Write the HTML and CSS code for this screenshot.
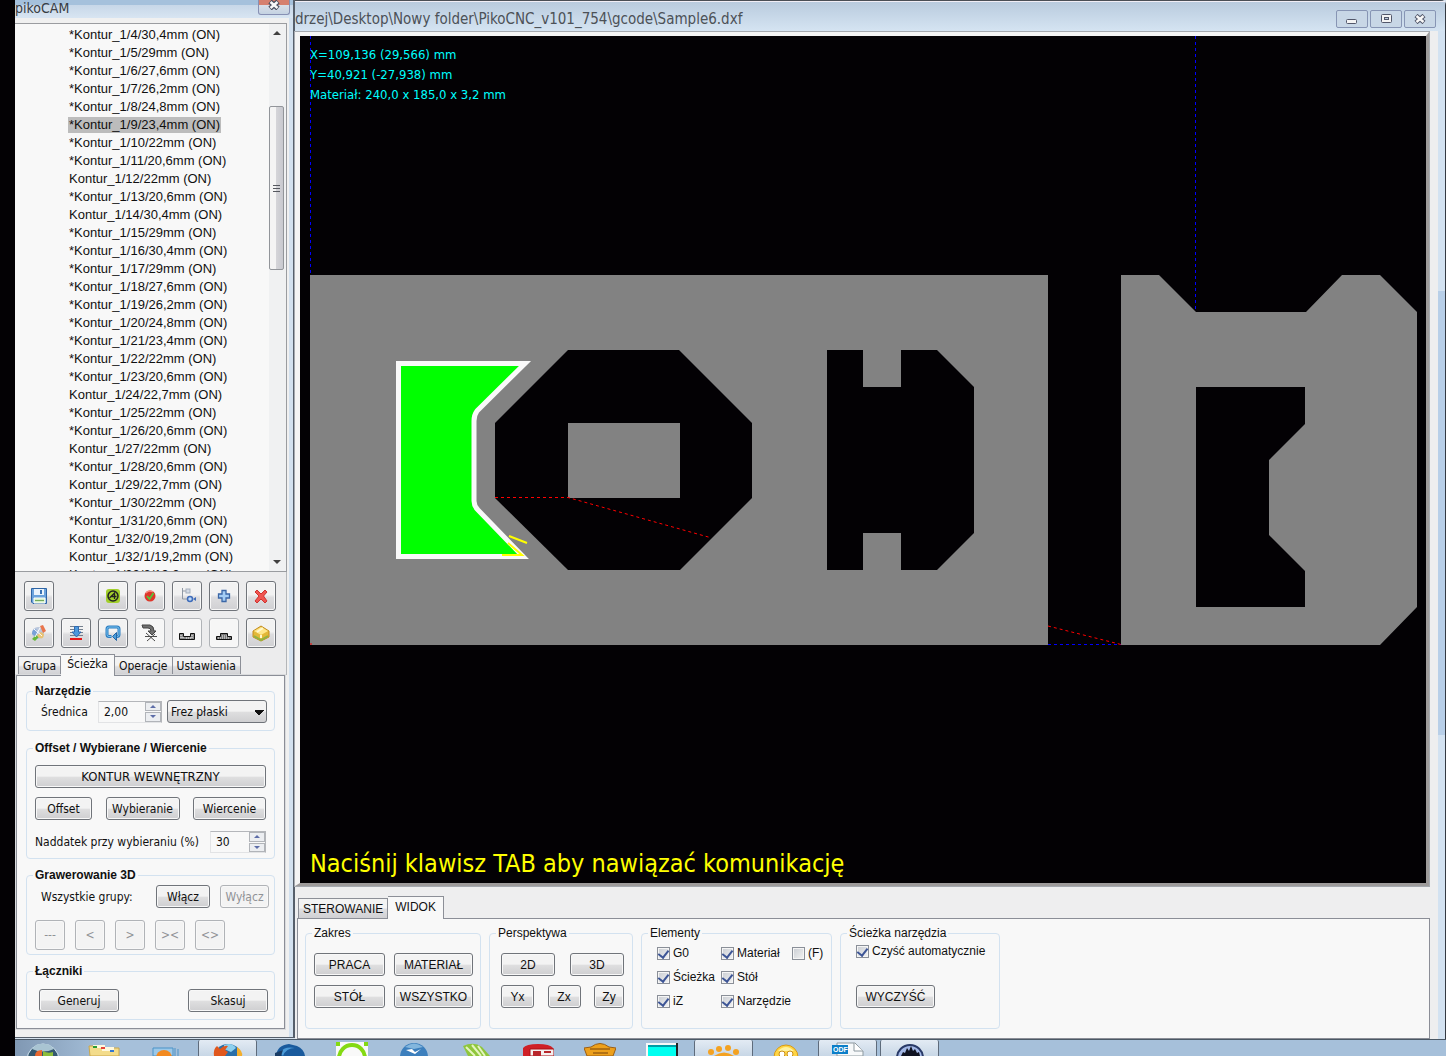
FILE: index.html
```html
<!DOCTYPE html>
<html lang="pl">
<head>
<meta charset="utf-8">
<title>pikoCAM</title>
<link rel="stylesheet" href="styles.css">
</head>
<body>
<div class="desktop">
  <div class="windows">
    <section class="cam">
      <header class="cam-title">
        <h1>pikoCAM</h1>
        <button class="close" aria-label="Zamknij"><svg width="12" height="10" viewBox="0 0 12 10"><path d="M2 1.500 10 8.500M10 1.500 2 8.500" stroke="#4a4d5e" stroke-width="5"/><path d="M2.500 2 9.500 8M9.500 2 2.500 8" stroke="#f8f8f8" stroke-width="2.600"/></svg></button>
      </header>
      <div class="cam-body">
        <div class="tree">
          <ul>
            <li>*Kontur_1/4/30,4mm (ON)</li>
            <li>*Kontur_1/5/29mm (ON)</li>
            <li>*Kontur_1/6/27,6mm (ON)</li>
            <li>*Kontur_1/7/26,2mm (ON)</li>
            <li>*Kontur_1/8/24,8mm (ON)</li>
            <li><span class="selected">*Kontur_1/9/23,4mm (ON)</span></li>
            <li>*Kontur_1/10/22mm (ON)</li>
            <li>*Kontur_1/11/20,6mm (ON)</li>
            <li>Kontur_1/12/22mm (ON)</li>
            <li>*Kontur_1/13/20,6mm (ON)</li>
            <li>Kontur_1/14/30,4mm (ON)</li>
            <li>*Kontur_1/15/29mm (ON)</li>
            <li>*Kontur_1/16/30,4mm (ON)</li>
            <li>*Kontur_1/17/29mm (ON)</li>
            <li>*Kontur_1/18/27,6mm (ON)</li>
            <li>*Kontur_1/19/26,2mm (ON)</li>
            <li>*Kontur_1/20/24,8mm (ON)</li>
            <li>*Kontur_1/21/23,4mm (ON)</li>
            <li>*Kontur_1/22/22mm (ON)</li>
            <li>*Kontur_1/23/20,6mm (ON)</li>
            <li>Kontur_1/24/22,7mm (ON)</li>
            <li>*Kontur_1/25/22mm (ON)</li>
            <li>*Kontur_1/26/20,6mm (ON)</li>
            <li>Kontur_1/27/22mm (ON)</li>
            <li>*Kontur_1/28/20,6mm (ON)</li>
            <li>Kontur_1/29/22,7mm (ON)</li>
            <li>*Kontur_1/30/22mm (ON)</li>
            <li>*Kontur_1/31/20,6mm (ON)</li>
            <li>Kontur_1/32/0/19,2mm (ON)</li>
            <li>Kontur_1/32/1/19,2mm (ON)</li>
            <li>Kontur_1/32/2/19,2mm (ON)</li>
          </ul>
          <div class="scrollbar">
            <svg width="15" height="18" viewBox="0 0 15 18"><path d="M4 11 8 7l4 4z" fill="#404040"/></svg>
            <div class="track"><div class="thumb"><i></i><i></i><i></i></div></div>
            <svg width="15" height="18" viewBox="0 0 15 18"><path d="M4 7h8l-4 4z" fill="#404040"/></svg>
          </div>
        </div>
        <div class="toolbar">
          <button class="tool first" aria-label="Zapisz"><svg viewBox="0 0 20 20"><path d="M2.500 2.500h15v15H4l-1.500-1.500z" fill="#6ba3dc" stroke="#2e64a5"/><path d="M5 3h10v6H5z" fill="#e9f3fc"/><path d="M11 4h2v4h-2z" fill="#3a72b4"/><path d="M5 12h11v5H5z" fill="#d5efc8" stroke="#fff"/><path d="M6 14.500h9" stroke="#73a95d"/></svg></button>
          <button class="tool skip" aria-label="Symulacja"><svg viewBox="0 0 20 20"><rect x="3" y="3" width="14" height="14" rx="3" fill="#a2cf2b"/><circle cx="10" cy="10" r="5" fill="none" stroke="#222" stroke-width="1.500"/><path d="m6.500 12 5-5v6M8 10.500h5.500" fill="none" stroke="#222" stroke-width="1.300"/></svg></button>
          <button class="tool" aria-label="Zatwierdź"><svg viewBox="0 0 20 20"><circle cx="10" cy="10" r="5.500" fill="#df352b"/><path d="M6 7a5 5 0 0 1 7-1" stroke="#f58b80" stroke-width="1.500" fill="none"/><path d="m7 10 2.500 3 4-6" fill="none" stroke="#55c93c" stroke-width="1.800"/></svg></button>
          <button class="tool" aria-label="Drzewo"><svg viewBox="0 0 20 20"><path d="M5.500 2v11H11M5.500 5H9" stroke="#9099a5" fill="none"/><rect x="9" y="3" width="4" height="4" fill="#d4dbe5" stroke="#a5afbd"/><circle cx="13" cy="13" r="2.500" fill="#bcd8f8" stroke="#3f6cb9" stroke-width="1.500"/><path d="m16 13 3-2v4z" fill="#3f6cb9"/></svg></button>
          <button class="tool" aria-label="Dodaj"><svg viewBox="0 0 20 20"><path d="M8 4.500h4V8h3.500v4H12v3.500H8V12H4.500V8H8z" fill="#a4cdf4" stroke="#3b66a6" stroke-width="1.300"/></svg></button>
          <button class="tool" aria-label="Usuń"><svg viewBox="0 0 20 20"><path d="m4 6 2-2 4 4 4-4 2 2-3.500 4L16 15l-2 2-4-4-4 4-2-2 4-5z" fill="#f05450" stroke="#ce3430"/></svg></button>
          <button class="tool" aria-label="Kolory"><svg viewBox="0 0 20 20"><circle cx="9" cy="10" r="6" fill="#bac7dc"/><path d="M3 11c0-4 2-5 4-5l2 4-2 4z" fill="#7aa1d8"/><path d="m11 3 3-1 3 6-3 2z" fill="#e9754c"/><path d="m3 16 4-4 3 2-4 4z" fill="#66b73c"/><path d="M9 14c4 3 6 1 6-3l-3-2-4 3z" fill="#e8c375"/><path d="m5 6 8 7M11 5l-5 9" stroke="#fff"/></svg></button>
          <button class="tool" aria-label="Głębokość"><svg viewBox="0 0 20 20"><path d="M4 3.500h13M4 6.500h13M4 9.500h13M4 12.500h13" stroke="#75808e"/><path d="M8.500 3.500h4V9H15l-4.500 5L6 9h2.500z" fill="#4c98dc" stroke="#3069ae"/><path d="M4 16h12" stroke="#e51919" stroke-width="2"/></svg></button>
          <button class="tool" aria-label="Odwróć"><svg viewBox="0 0 20 20"><path d="M8.500 13.500H6a2 2 0 0 1-2-2V6a2 2 0 0 1 2-2h8a2 2 0 0 1 2 2v5.500a2 2 0 0 1-2 2" fill="none" stroke="#2b7cc1" stroke-width="3"/><path d="M8 13.500H6a2 2 0 0 1-2-2V6a2 2 0 0 1 2-2h8a2 2 0 0 1 2 2v5.500a2 2 0 0 1-2 2" fill="none" stroke="#79c3ef"/><path d="m9.500 13.500 4-4v8z" fill="#499cda" stroke="#2365a4"/></svg></button>
          <button class="tool pale" aria-label="Punkt"><svg viewBox="0 0 20 20"><path d="M2 2h8q4 1 4 6h2l-4 4-4-4h3q0-3-3-3H3z" fill="#707070" stroke="#444"/><path d="M5 13.500h12M7 18l8-7M6 10l9 8" stroke="#4a4a4a"/></svg></button>
          <button class="tool pale" aria-label="Kieszeń"><svg viewBox="0 0 20 20"><path d="M2.500 10.500h4v3h7v-3h4v6h-15z" fill="#8b8b8b" stroke="#111"/><path d="M4 12v4M6 14v2M9 15h6M15 12v4" stroke="#f4f4f4" stroke-dasharray="1 1"/></svg></button>
          <button class="tool pale" aria-label="Wyspa"><svg viewBox="0 0 20 20"><path d="M2.500 16.500v-3h4v-3h7v3h4v3z" fill="#777" stroke="#111"/><path d="M4 15h12M8 13h5" stroke="#f4f4f4" stroke-dasharray="1 1"/></svg></button>
          <button class="tool" aria-label="Bryła"><svg viewBox="0 0 20 20"><path d="m2 8 8-5 8 5v6l-8 4-8-4z" fill="#e3b838" stroke="#c48d20"/><path d="m3 8 7-4 7 4-7 4z" fill="#ffe78b"/><path d="m3 13 7 4 7-4" fill="none" stroke="#92b440" stroke-width="2"/><path d="m6 9 6-4M10 12v3" stroke="#fff8cf" stroke-width="2"/></svg></button>
        </div>
        <nav class="tabs">
          <button class="tab">Grupa</button><button class="tab active">Ścieżka</button><button class="tab">Operacje</button><button class="tab">Ustawienia</button>
        </nav>
        <div class="page">
          <fieldset class="tool-group">
            <legend>Narzędzie</legend>
            <div class="row">
              <label class="indent grow" for="dia">Średnica</label>
              <span class="spin"><input id="dia" type="text" value="2,00"><span class="arrows"><button aria-label="Więcej" class="up"></button><button aria-label="Mniej" class="down"></button></span></span>
              <select class="select" aria-label="Rodzaj narzędzia"><option>Frez płaski</option></select>
            </div>
          </fieldset>
          <fieldset class="offset-group">
            <legend>Offset / Wybierane / Wiercenie</legend>
            <button class="btn wide">KONTUR WEWNĘTRZNY</button>
            <div class="row between"><button class="btn w57">Offset</button><button class="btn w74">Wybieranie</button><button class="btn w73">Wiercenie</button></div>
            <div class="row between low"><label for="nad">Naddatek przy wybieraniu (%)</label>
              <span class="spin narrow"><input id="nad" type="text" value="30"><span class="arrows"><button aria-label="Więcej" class="up"></button><button aria-label="Mniej" class="down"></button></span></span></div>
          </fieldset>
          <fieldset class="engrave-group">
            <legend>Grawerowanie 3D</legend>
            <div class="row"><span class="indent grow">Wszystkie grupy:</span><button class="btn w54">Włącz</button><button class="btn w49" disabled>Wyłącz</button></div>
            <div class="row squares"><button class="btn" disabled>---</button><button class="btn" disabled>&lt;</button><button class="btn" disabled>&gt;</button><button class="btn" disabled>&gt;&lt;</button><button class="btn" disabled>&lt;&gt;</button></div>
          </fieldset>
          <fieldset class="link-group">
            <legend>Łączniki</legend>
            <div class="row between"><button class="btn w80">Generuj</button><button class="btn w80">Skasuj</button></div>
          </fieldset>
        </div>
      </div>
    </section>

    <main class="cnc">
      <header class="cnc-title">
        <h2>drzej\Desktop\Nowy folder\PikoCNC_v101_754\gcode\Sample6.dxf</h2>
        <div class="controls">
          <button aria-label="Minimalizuj"><svg width="14" height="12" viewBox="0 0 14 12"><rect x="1.500" y="6.500" width="10" height="4" rx="1" fill="#f4f4f4" stroke="#52576a"/></svg></button>
          <button aria-label="Maksymalizuj"><svg width="14" height="12" viewBox="0 0 14 12"><rect x="2.500" y="1.500" width="10" height="8" rx="1" fill="#f4f4f4" stroke="#52576a"/><rect x="5.500" y="4.500" width="4" height="2" fill="#bccbdc" stroke="#52576a"/></svg></button>
          <button aria-label="Zamknij"><svg width="12" height="10" viewBox="0 0 12 10"><path d="M2 1.500 10 8.500M10 1.500 2 8.500" stroke="#52576a" stroke-width="4.500"/><path d="M2.500 2 9.500 8M9.500 2 2.500 8" stroke="#f8f8f8" stroke-width="2.400"/></svg></button>
        </div>
      </header>
      <div class="cnc-body">
        <div class="cnc-content">
          <div class="stage">
            <svg class="drawing" viewBox="300 36 1126 847" preserveAspectRatio="xMinYMin meet">
              <g fill="#828282">
                <path d="M310 275h738v370H310z"/>
                <path d="m1121 275h38l37 37h110l36-37h38l37 37v295l-37 38h-259z"/>
              </g>
              <g fill="#030104">
                <path d="M568 350h111l73 73v75l-72 72H568l-73-72v-75z"/>
                <path d="M827 350h36v37h38v-37h36l37 37v146l-37 37h-36v-37h-38v37h-36z"/>
                <path d="M1196 387h109v37l-36 36v75l36 36v36h-109z"/>
              </g>
              <path d="M568 423h112v75H568z" fill="#828282"/>
              <path d="M398.500 363.500H525L477 411q-3 4-3 10v80q0 5 4 9l45 46.500H398.500z" fill="#0f0" stroke="#f9f9f9" stroke-width="5"/>
              <path d="m509 536 18 7M508 543l14 12h-20" fill="none" stroke="#ff0" stroke-width="2"/>
              <g fill="none" stroke-dasharray="3 3">
                <path d="M310.500 36v239M1195.500 36v276M1048 644.500h73" stroke="#00f"/>
                <path d="M495 497.500h73l142 40M1048 626l73 18.500" stroke="#f00"/>
              </g>
              <path d="M310 644h2" stroke="#f00"/>
            </svg>
            <div class="readout"><p>X=109,136 (29,566) mm</p><p>Y=40,921 (-27,938) mm</p><p>Materiał: 240,0 x 185,0 x 3,2 mm</p></div>
            <p class="prompt">Naciśnij klawisz TAB aby nawiązać komunikację</p>
          </div>
          <nav class="tabs view-tabs"><button class="tab">STEROWANIE</button><button class="tab active">WIDOK</button></nav>
          <div class="view-page">
            <fieldset class="range">
              <legend>Zakres</legend>
              <div class="pair-grid"><button class="btn">PRACA</button><button class="btn">MATERIAŁ</button><button class="btn">STÓŁ</button><button class="btn">WSZYSTKO</button></div>
            </fieldset>
            <fieldset class="persp">
              <legend>Perspektywa</legend>
              <div class="row between"><button class="btn w54">2D</button><button class="btn w54">3D</button></div>
              <div class="row between"><button class="btn w33">Yx</button><button class="btn w33">Zx</button><button class="btn w30">Zy</button></div>
            </fieldset>
            <fieldset class="elements">
              <legend>Elementy</legend>
              <div class="checks">
                <label><input type="checkbox" checked>G0</label><label><input type="checkbox" checked>Materiał</label><label><input type="checkbox">(F)</label>
                <label><input type="checkbox" checked>Ścieżka</label><label><input type="checkbox" checked>Stół</label><span></span>
                <label><input type="checkbox" checked>iZ</label><label><input type="checkbox" checked>Narzędzie</label>
              </div>
            </fieldset>
            <fieldset class="path">
              <legend>Ścieżka narzędzia</legend>
              <label><input type="checkbox" checked>Czyść automatycznie</label>
              <button class="btn w79">WYCZYŚĆ</button>
            </fieldset>
          </div>
        </div>
      </div>
    </main>
  </div>

  <footer class="taskbar">
    <button class="task start" aria-label="Start"><svg viewBox="0 0 32 14"><circle cx="16" cy="18" r="16" fill="#34586f" stroke="#d7e9f4"/><path d="M5 7a14 14 0 0 1 22 0q-11 5-22 0" fill="#a9c4d2"/><path d="M8 14q0-6 7-6v6z" fill="#e9682f"/><path d="M16 9q5 3 10 1v4H16z" fill="#8cbd3a"/></svg></button>
    <button class="task" aria-label="Eksplorator"><svg viewBox="0 0 32 14"><path d="M1 4h10l2 2h18v8H2z" fill="#f3dc8b" stroke="#caa64b"/><path d="M5 3h12v3H5zM14 5h12v4H14z" fill="#fff8dc"/><path d="M5 4h4v2H5z" fill="#2a9b32"/><path d="M13 5h4v2h-4z" fill="#e4443a"/><path d="M22 8h4v2h-4z" fill="#3177d2"/></svg></button>
    <button class="task" aria-label="Odtwarzacz"><svg viewBox="0 0 32 14"><path d="M3 6h20v8H3zM25 6v8M28 7v7" fill="#9cc8e8" stroke="#4b93c8"/><circle cx="14" cy="16" r="8" fill="#f28a20"/></svg></button>
    <button class="task open" aria-label="Firefox"><svg viewBox="0 0 32 14"><circle cx="16" cy="16" r="14" fill="#2a6fa8"/><path d="M12 3q8-3 12 3l-5 4-7-3z" fill="#8dd0ee"/><path d="M2 14Q1 7 5 4l3 3q4-4 8-3l-3 4 3 2-3 4z" fill="#e0571d"/><path d="M25 5q6 4 5 9h-5z" fill="#f4ae2c"/></svg></button>
    <button class="task" aria-label="Thunderbird"><svg viewBox="0 0 32 14"><path d="M2 14Q3 3 15 2l8 2q7 3 8 10z" fill="#195a9d"/><path d="M6 11q4-7 15-5-9 0-12 8z" fill="#4b9bd8"/><path d="m1 11 8-3-2 6H1z" fill="#183c66"/></svg></button>
    <button class="task" aria-label="Edytor"><svg viewBox="0 0 32 14"><path d="M0 0h32v14H0z" fill="#f9f9f9"/><circle cx="16" cy="16" r="13" fill="none" stroke="#84da13" stroke-width="4"/><path d="M0 0h4v4H0zM28 0h4v4h-4z" fill="#84da13"/></svg></button>
    <button class="task" aria-label="OpenOffice"><svg viewBox="0 0 32 14"><circle cx="16" cy="15" r="14" fill="#3c7fbd"/><path d="M7 5q9-7 18 0l-9 2z" fill="#83b6dd"/><path d="m8 8 6-1 3 3 6-3-6 5z" fill="#fff"/></svg></button>
    <button class="task" aria-label="CorelDRAW"><svg viewBox="0 0 32 14"><path d="M3 4q11-5 19 1l8 9H8z" fill="#8fc63b"/><path d="m6 5 9 9M12 3l9 11M18 4l7 10" stroke="#e4f4be" stroke-width="2"/></svg></button>
    <button class="task" aria-label="Edytor PDF"><svg viewBox="0 0 32 14"><path d="M1 6q3-4 15-4t15 4v8H1z" fill="#cf2027"/><path d="M8 7h24v7H8z" fill="#f4f0ef" stroke="#a91017"/><path d="M11 9h8v5h-8zM22 9h7v2h-7z" fill="#b9262b"/></svg></button>
    <button class="task" aria-label="Narzędzia"><svg viewBox="0 0 32 14"><path d="m0 6 7-1q9-7 18 0l7 1-3 8H3z" fill="#eda01c" stroke="#9c5e13"/><path d="M6 7h20M9 11h15" stroke="#78430b"/></svg></button>
    <button class="task" aria-label="Terminal"><svg viewBox="0 0 32 14"><path d="M0 1h32v13H0z" fill="#222"/><path d="M0 1h30v13H0z" fill="#f8f8f8"/><path d="M2 3h28v11H2z" fill="#00fff0"/><path d="M2 3h28v2H2z" fill="#009ca5"/></svg></button>
    <button class="task open" aria-label="Grafika"><svg viewBox="0 0 32 14"><g fill="#f4a221"><circle cx="3" cy="10" r="3"/><circle cx="11" cy="7" r="3"/><circle cx="20" cy="6" r="3"/><circle cx="28" cy="10" r="3"/><path d="M6 14q10-7 20 0z"/></g></svg></button>
    <button class="task" aria-label="Komunikator"><svg viewBox="0 0 32 14"><circle cx="16" cy="15" r="12" fill="#ffd544" stroke="#d79a18"/><path d="M8 9q8-8 16 0z" fill="#fff3a1"/><g fill="#fff" stroke="#c98f1c"><circle cx="12" cy="12" r="3"/><circle cx="20" cy="12" r="3"/></g></svg></button>
    <button class="task open" aria-label="Dokument ODF"><svg viewBox="0 0 32 14"><path d="M5 1h18l8 8v5H5z" fill="#f7f9fa" stroke="#8c989f"/><path d="M22 1v8h9" fill="#fff" stroke="#8c989f"/><path d="M0 3h16v9H0z" fill="#0c7fc9"/><text class="odf" x="1" y="10">ODF</text></svg></button>
    <button class="task open" aria-label="pikoCNC"><svg viewBox="0 0 32 14"><circle cx="16" cy="16" r="13" fill="#a3b8e6" stroke="#293a68" stroke-width="2"/><path d="m7 14 2-4 2 1 2-5 2 3 2-5 2 5 2-2 2 4 2-1 1 4z" fill="#101322"/></svg></button>
  </footer>
</div>
</body>
</html>
```
FILE: styles.css
```css
* { box-sizing: border-box; }

body {
  margin: 0;
  background: #030104;
  color: #101010;
  font: 12px/14px "DejaVu Sans Condensed", "Noto Sans", sans-serif;
}

h1, h2, p, ul { margin: 0; padding: 0; font-weight: normal; }
button, input, select { margin: 0; padding: 0; font: inherit; color: inherit; }
svg { display: block; }

.desktop {
  display: flex;
  flex-direction: column;
  height: 100vh;
  min-height: 800px;
  padding-left: 15px;
  overflow: hidden;
}

.windows { display: flex; flex: 1; min-height: 0; background: #d6e2ee; }

/* Side window */
.cam {
  display: flex;
  flex-direction: column;
  flex: 0 0 280px;
  margin-bottom: 1px;
  border-right: 2px solid #565f6b;
  border-bottom: 1px solid #565f6b;
  background: #d3e1ef;
}

.cam-title {
  display: flex;
  justify-content: space-between;
  align-items: flex-start;
  height: 18px;
  background: linear-gradient(#a5c1dc 0 5px, #c7d7e8 5px, #d8e5f2);
}

.cam-title h1 { font-size: 14px; line-height: 16px; color: #383c42; }

.close {
  display: grid;
  place-items: center;
  width: 32px;
  height: 15px;
  margin-right: 3px;
  padding-bottom: 4px;
  border: 1px solid #8790b4;
  border-top: 0;
  border-radius: 0 0 3px 3px;
  background: linear-gradient(#d6806f 0 5px, #d9dfe8 5px, #c4d2e2);
}

.cam-body {
  display: flex;
  flex-direction: column;
  flex: 1;
  min-height: 0;
  margin-right: 4px;
  padding: 5px 2px 7px 0;
  background: #f0f0f0;
}

.tree {
  display: flex;
  flex: 1;
  min-height: 0;
  overflow: hidden;
  border: 1px solid #9a9ca0;
  border-left: 0;
  background: #f8f8f8;
}

.tree ul {
  flex: 1;
  padding: 2px 0 0 54px;
  list-style: none;
  font: 13px/18px "Liberation Sans", Arial, sans-serif;
}

.tree li { height: 18px; white-space: nowrap; }
.selected { display: inline-block; height: 16px; margin: 1px 0 0 -1px; padding: 0 1px; line-height: 16px; background: #bcbcbc; vertical-align: top; }

.scrollbar { display: flex; flex-direction: column; width: 17px; padding-right: 2px; background: #f0f1f2; }
.track { flex: 1; padding: 64px 0 0; }

.thumb {
  display: flex;
  flex-direction: column;
  justify-content: center;
  align-items: center;
  gap: 2px;
  height: 164px;
  border: 1px solid #92959a;
  border-radius: 2px;
  background: linear-gradient(90deg, #f4f4f4 0 45%, #d4d4d8 50%, #c8c9cf);
}

.thumb i { width: 7px; height: 1px; background: #55585f; }

.toolbar {
  display: grid;
  grid-template-columns: repeat(7, 30px);
  gap: 7px;
  padding: 9px 9px 6px;
  border-right: 1px solid #b4b6b9;
  background: #ececed;
}

.tool {
  display: grid;
  place-items: center;
  height: 30px;
  border: 1px solid #70747a;
  border-radius: 3px;
  background: linear-gradient(#f2f2f2 0 45%, #dddddf 55%, #d0d0d3);
  box-shadow: inset 0 0 0 1px #f8f8f8;
}

.tool svg { width: 20px; height: 20px; }
.tool.skip { grid-column: 3; }
.tool.pale { border-color: #b0b3b7; background: #f6f6f6; }

.tabs { display: flex; align-items: flex-end; padding-left: 3px; height: 21px; }
.cam .tabs { border-right: 1px solid #b4b6b9; background: #ececed; }

.tab {
  height: 19px;
  padding: 0 4px;
  border: 1px solid #8c8f97;
  border-left-width: 0;
  border-bottom: 0;
  background: linear-gradient(#f3f3f3 0 45%, #dedee0 55%, #d0d0d3);
  white-space: nowrap;
}

.tab:first-child { border-left-width: 1px; }
.tab.active { position: relative; z-index: 1; height: 22px; margin-bottom: -1px; padding: 0 6px 4px; background: #f8f8f8; }

.page {
  display: flex;
  flex-direction: column;
  gap: 9px;
  margin: 0 2px 1px 1px;
  padding: 8px 9px;
  border: 1px solid #8b8e97;
  outline: 1px solid #dadbdd;
  background: #f8f8f8;
}

fieldset {
  display: flex;
  flex-direction: column;
  min-width: 0;
  margin: 0;
  border: 1px solid #d3e2f0;
  border-radius: 4px;
}

legend { height: 14px; padding: 0 2px; font-family: "Liberation Sans", Arial, sans-serif; }
.page legend { font-weight: bold; }
.page fieldset { padding: 0 8px; }
.page legend { margin-left: -2px; }

.row { display: flex; align-items: center; }
.between { justify-content: space-between; }
.grow { flex: 1; }
.indent { padding-left: 6px; }

.btn {
  height: 23px;
  border: 1px solid #70747a;
  border-radius: 3px;
  background: linear-gradient(#f3f3f3 0 48%, #dededf 54%, #cfcfd1);
  box-shadow: inset 0 0 0 1px #f8f8f8;
  white-space: nowrap;
}

.btn:disabled { border-color: #b0b3b7; background: #f3f3f3; color: #909296; }

.wide { font-size: 13px; }
.w30 { width: 30px; }
.w33 { width: 33px; }
.w49 { width: 49px; }
.w54 { width: 54px; }
.w57 { width: 57px; }
.w73 { width: 73px; }
.w74 { width: 74px; }
.w79 { width: 79px; }
.w80 { width: 80px; }

.spin { display: flex; width: 64px; height: 22px; border: 1px solid #e2e3e5; border-top-color: #b4b6ba; border-right-color: #b4b6ba; background: #f8f8f8; }
.spin.narrow { width: 56px; }
.spin input { flex: 1; min-width: 0; padding-left: 5px; border: 0; background: none; outline: 0; }
.arrows { display: grid; width: 16px; gap: 1px; }
.arrows button { display: grid; place-items: center; border: 1px solid #b1b4b9; background: #eceef1; }
.arrows button::after { content: ""; border: 3px solid transparent; border-top-width: 0; border-bottom-color: #5d6da8; }
.arrows .down::after { border-width: 3px 3px 0; border-top-color: #5d6da8; }

.select {
  appearance: none;
  width: 100px;
  height: 23px;
  margin-left: 5px;
  padding: 0 3px;
  border: 1px solid #70747a;
  border-radius: 3px;
  background:
    linear-gradient(to bottom left, #111 50%, transparent 50%) 86px 9px / 5px 5px no-repeat,
    linear-gradient(to bottom right, #111 50%, transparent 50%) 91px 9px / 5px 5px no-repeat,
    linear-gradient(#f3f3f3 0 48%, #dededf 54%, #cfcfd1);
}

.page .tool-group { padding: 2px 7px 7px 8px; }
.page .offset-group { gap: 9px; padding-top: 10px; padding-bottom: 5px; margin-top: 1px; }
.low { margin-top: 2px; }
.page .engrave-group { gap: 12px; padding: 3px 5px 4px 8px; }
.engrave-group .w49 { margin-left: 10px; }
.squares { gap: 10px; }
.squares .btn { width: 30px; height: 30px; }
.page .link-group { padding: 11px 6px 7px 12px; }
.page .link-group legend { margin-left: -6px; }

/* Main window */
.cnc {
  display: flex;
  flex-direction: column;
  flex: 1;
  min-width: 0;
  border-top: 1px solid #4b4f56;
  border-right: 1px solid #343a42;
  border-top-right-radius: 5px;
  background: #d3e2f1;
}

.cnc-title {
  display: flex;
  justify-content: space-between;
  align-items: center;
  height: 30px;
  padding: 6px 9px 0 0;
  background: linear-gradient(#f1eef6 0 1px, #b9cbde 1px, #d5e4f2);
}

.cnc-title h2 { font-size: 15px; line-height: 24px; color: #4c5157; white-space: nowrap; }
.controls { display: flex; gap: 2px; }
.controls button { display: grid; place-items: center; width: 32px; height: 18px; border: 1px solid #8795b4; border-radius: 2px; background: #c8d7e6; }

.cnc-body {
  display: flex;
  flex: 1;
  min-height: 0;
  padding-right: 7px;
  background: linear-gradient(#d3e2f1 0 260px, #b8cfe8 260px 704px, #d3e2f1 704px);
}

.cnc-content { display: flex; flex-direction: column; flex: 1; min-width: 0; background: #eeeeef; }

.stage {
  position: relative;
  flex: 1;
  min-height: 0;
  margin: 1px 9px 2px 0;
  overflow: hidden;
  border: 5px solid #f4f4f4;
  border-width: 4px 3px 3px 5px;
  border-right-color: #9e9b9b;
  border-bottom-color: #9e9b9b;
  outline: 1px solid #a5a9af;
  background: #030104;
}

.drawing { width: 100%; height: 100%; }
.readout { position: absolute; left: 10px; top: 9px; color: #00ffff; font-size: 13px; line-height: 20px; }
.prompt { position: absolute; left: 10px; bottom: 3px; color: #ffff00; font-size: 25px; line-height: 32px; white-space: nowrap; }

.view-tabs { height: 30px; font-family: "Liberation Sans", Arial, sans-serif; }
.view-tabs .tab { height: 20px; }
.view-tabs .active { height: 23px; padding: 0 7px 3px; }

.view-page {
  display: flex;
  align-items: flex-start;
  gap: 8px;
  margin: 0 8px 0 2px;
  padding: 7px 8px 9px 7px;
  border: 1px solid #8b8e97;
  background: #f8f8f8;
  font-family: "Liberation Sans", Arial, sans-serif;
}

.view-page fieldset { height: 103px; padding: 13px 7px 0 8px; gap: 9px; }
.view-page legend { margin-left: -2px; }
.range { width: 176px; }
.pair-grid { display: grid; grid-template-columns: 71px 79px; gap: 9px; }
.view-page .persp { width: 144px; padding-left: 11px; padding-right: 8px; }
.view-page .persp legend { margin-left: -5px; }
.view-page .elements { width: 191px; padding: 6px 0 0 15px; }
.view-page .elements legend { margin-left: -9px; }
.checks { display: grid; grid-template-columns: 64px 71px auto; row-gap: 10px; }
.view-page label { display: flex; align-items: center; gap: 3px; height: 14px; white-space: nowrap; }
.view-page .path { width: 160px; gap: 27px; padding: 4px 0 0 15px; }
.view-page .path legend { margin-left: -9px; }

input[type="checkbox"] {
  appearance: none;
  display: grid;
  flex: none;
  place-items: center;
  width: 13px;
  height: 13px;
  border: 1px solid #8a8f98;
  background: linear-gradient(135deg, #c9cdd3, #f3f3f3);
  box-shadow: inset 0 0 0 1px #f5f5f5;
}

input[type="checkbox"]:checked::after {
  content: "";
  width: 5px;
  height: 8px;
  margin-bottom: 3px;
  border: solid #3d5596;
  border-width: 0 2px 2px 0;
  transform: rotate(38deg);
}

/* Taskbar */
.taskbar {
  display: flex;
  gap: 3px;
  height: 17px;
  flex: none;
  border-top: 1px solid #4b5865;
  background: linear-gradient(90deg, #8098b3, #a6c0da 90px);
  overflow: hidden;
}

.task { flex: 0 0 59px; display: flex; justify-content: center; padding: 2px 0 0; border: 1px solid transparent; border-width: 0 1px; background: none; }
.task svg { width: 32px; height: 14px; }
.task.start { flex-basis: 56px; }
.task.open { border-color: #5e6b7b; border-radius: 2px 2px 0 0; background: linear-gradient(#e3ebf4, #c8d7e6); }
.odf { font: bold 7px/9px "Liberation Sans", Arial, sans-serif; fill: #fff; }
```
